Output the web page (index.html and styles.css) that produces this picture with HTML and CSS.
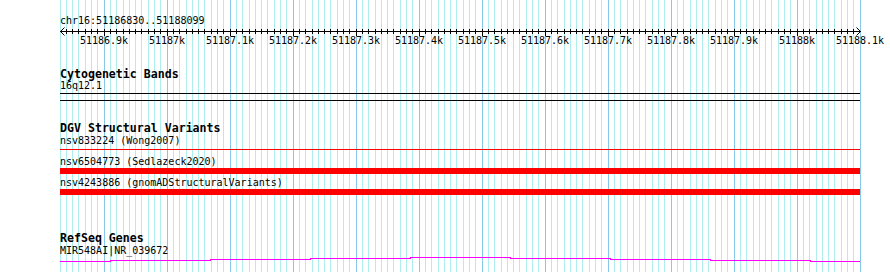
FILE: index.html
```html
<!DOCTYPE html>
<html lang="en">

<head>
    <meta charset="UTF-8">
    <meta name="viewport" content="width=device-width, initial-scale=1.0">
    <title>chr16:51186830..51188099</title>
    <link rel="stylesheet" href="styles.css">
</head>

<body>
    <div class="browser">
        <svg class="grid" id="grid" width="890" height="272"></svg>

        <div class="panel">
            <div class="ruler">
                <div class="locus">chr16:51186830..51188099</div>
                <svg class="axis" id="axis" width="801" height="20"></svg>
            </div>

            <div class="track cytobands">
                <h3>Cytogenetic Bands</h3>
                <div class="label">16q12.1</div>
                <div class="band"></div>
            </div>

            <div class="track dgv">
                <h3>DGV Structural Variants</h3>
                <div class="feature first">
                    <div class="label">nsv833224 (Wong2007)</div>
                    <div class="sv-line"></div>
                </div>
                <div class="feature second">
                    <div class="label">nsv6504773 (Sedlazeck2020)</div>
                    <div class="sv-bar"></div>
                </div>
                <div class="feature third">
                    <div class="label">nsv4243886 (gnomADStructuralVariants)</div>
                    <div class="sv-bar"></div>
                </div>
            </div>

            <div class="track refseq">
                <h3>RefSeq Genes</h3>
                <div class="label">MIR548AI|NR_039672</div>
                <svg class="wiggle" width="800" height="5">
                    <polyline points="0,4.5 50,4.5 50,3.5 150,3.5 150,2.5 250,2.5 250,1.5 350,1.5 350,0.5 450,0.5 450,1.5 550,1.5 550,2.5 650,2.5 650,3.5 750,3.5 750,4.5 800,4.5" />
                </svg>
            </div>
        </div>
    </div>

    <script>
        // view: 51186830..51188100 drawn over 800px, one step = 10bp
        const start = 51186830;
        const step = 6.3;
        const svgNS = 'http://www.w3.org/2000/svg';

        function line(parent, x1, y1, x2, y2, cls) {
            const el = document.createElementNS(svgNS, 'line');
            el.setAttribute('x1', x1);
            el.setAttribute('y1', y1);
            el.setAttribute('x2', x2);
            el.setAttribute('y2', y2);
            if (cls) el.setAttribute('class', cls);
            parent.appendChild(el);
        }

        const grid = document.getElementById('grid');
        const axis = document.getElementById('axis');

        for (let i = 0; i <= 127; i++) {
            const pos = start + i * 10;
            const x = Math.floor(i * step + 0.001);
            const major = pos % 100 === 0;

            line(grid, 60 + x + 0.5, 0, 60 + x + 0.5, 272, major ? 'major' : 'minor');

            if (i > 0 && i < 127) {
                line(axis, x + 0.5, 2, x + 0.5, major ? 9 : 7);
            }

            if (major) {
                const label = document.createElementNS(svgNS, 'text');
                label.setAttribute('x', x);
                label.setAttribute('y', 17);
                label.textContent = (pos / 1000) + 'k';
                axis.appendChild(label);
            }
        }

        // axis line with arrows at both ends
        line(axis, 0, 4.5, 801, 4.5);
        line(axis, 0.5, 4.5, 4.5, 0.5);
        line(axis, 0.5, 4.5, 4.5, 8.5);
        line(axis, 800.5, 4.5, 796.5, 0.5);
        line(axis, 800.5, 4.5, 796.5, 8.5);
    </script>
</body>

</html>
```

FILE: styles.css
```css
body {
    font-family: "DejaVu Sans Mono", monospace;
    font-size: 10px;
    line-height: 12px;
    color: black;
    margin: 0;
    padding: 0;
}

.browser {
    position: relative;
    width: 890px;
    height: 272px;
    overflow: hidden;
    background-color: white;
}

.grid {
    position: absolute;
    top: 0;
    left: 0;
}

.grid line {
    stroke-width: 1;
    shape-rendering: crispEdges;
}

.grid .minor {
    stroke: #aeeeee;
}

.grid .major {
    stroke: #87c8e8;
}

.panel {
    position: relative;
    margin-left: 60px;
    width: 800px;
    padding-top: 15px;
}

.axis {
    display: block;
    overflow: visible;
}

.axis line {
    stroke: black;
    stroke-width: 1;
}

.axis text {
    font-family: "DejaVu Sans Mono", monospace;
    font-size: 10px;
    text-anchor: middle;
    fill: black;
}

.track h3 {
    margin: 0;
    font-size: 11.6px;
    line-height: 13px;
    font-weight: bold;
}

.label {
    white-space: nowrap;
}

.cytobands {
    margin-top: 21px;
}

.cytobands .label {
    margin-top: -1px;
}

.band {
    margin-top: 1px;
    height: 6px;
    border-top: 1px solid black;
    border-bottom: 1px solid black;
}

.dgv {
    margin-top: 21px;
}

.feature.first {
    margin-top: 0;
}

.feature.second {
    margin-top: 6px;
}

.feature.third {
    margin-top: 3px;
}

.sv-line {
    margin-top: 2px;
    height: 1px;
    background-color: red;
}

.sv-bar {
    height: 6px;
    background-color: red;
}

.refseq {
    margin-top: 37px;
}

.wiggle {
    display: block;
}

.wiggle polyline {
    fill: none;
    stroke: magenta;
    stroke-width: 1;
    shape-rendering: crispEdges;
}
```
